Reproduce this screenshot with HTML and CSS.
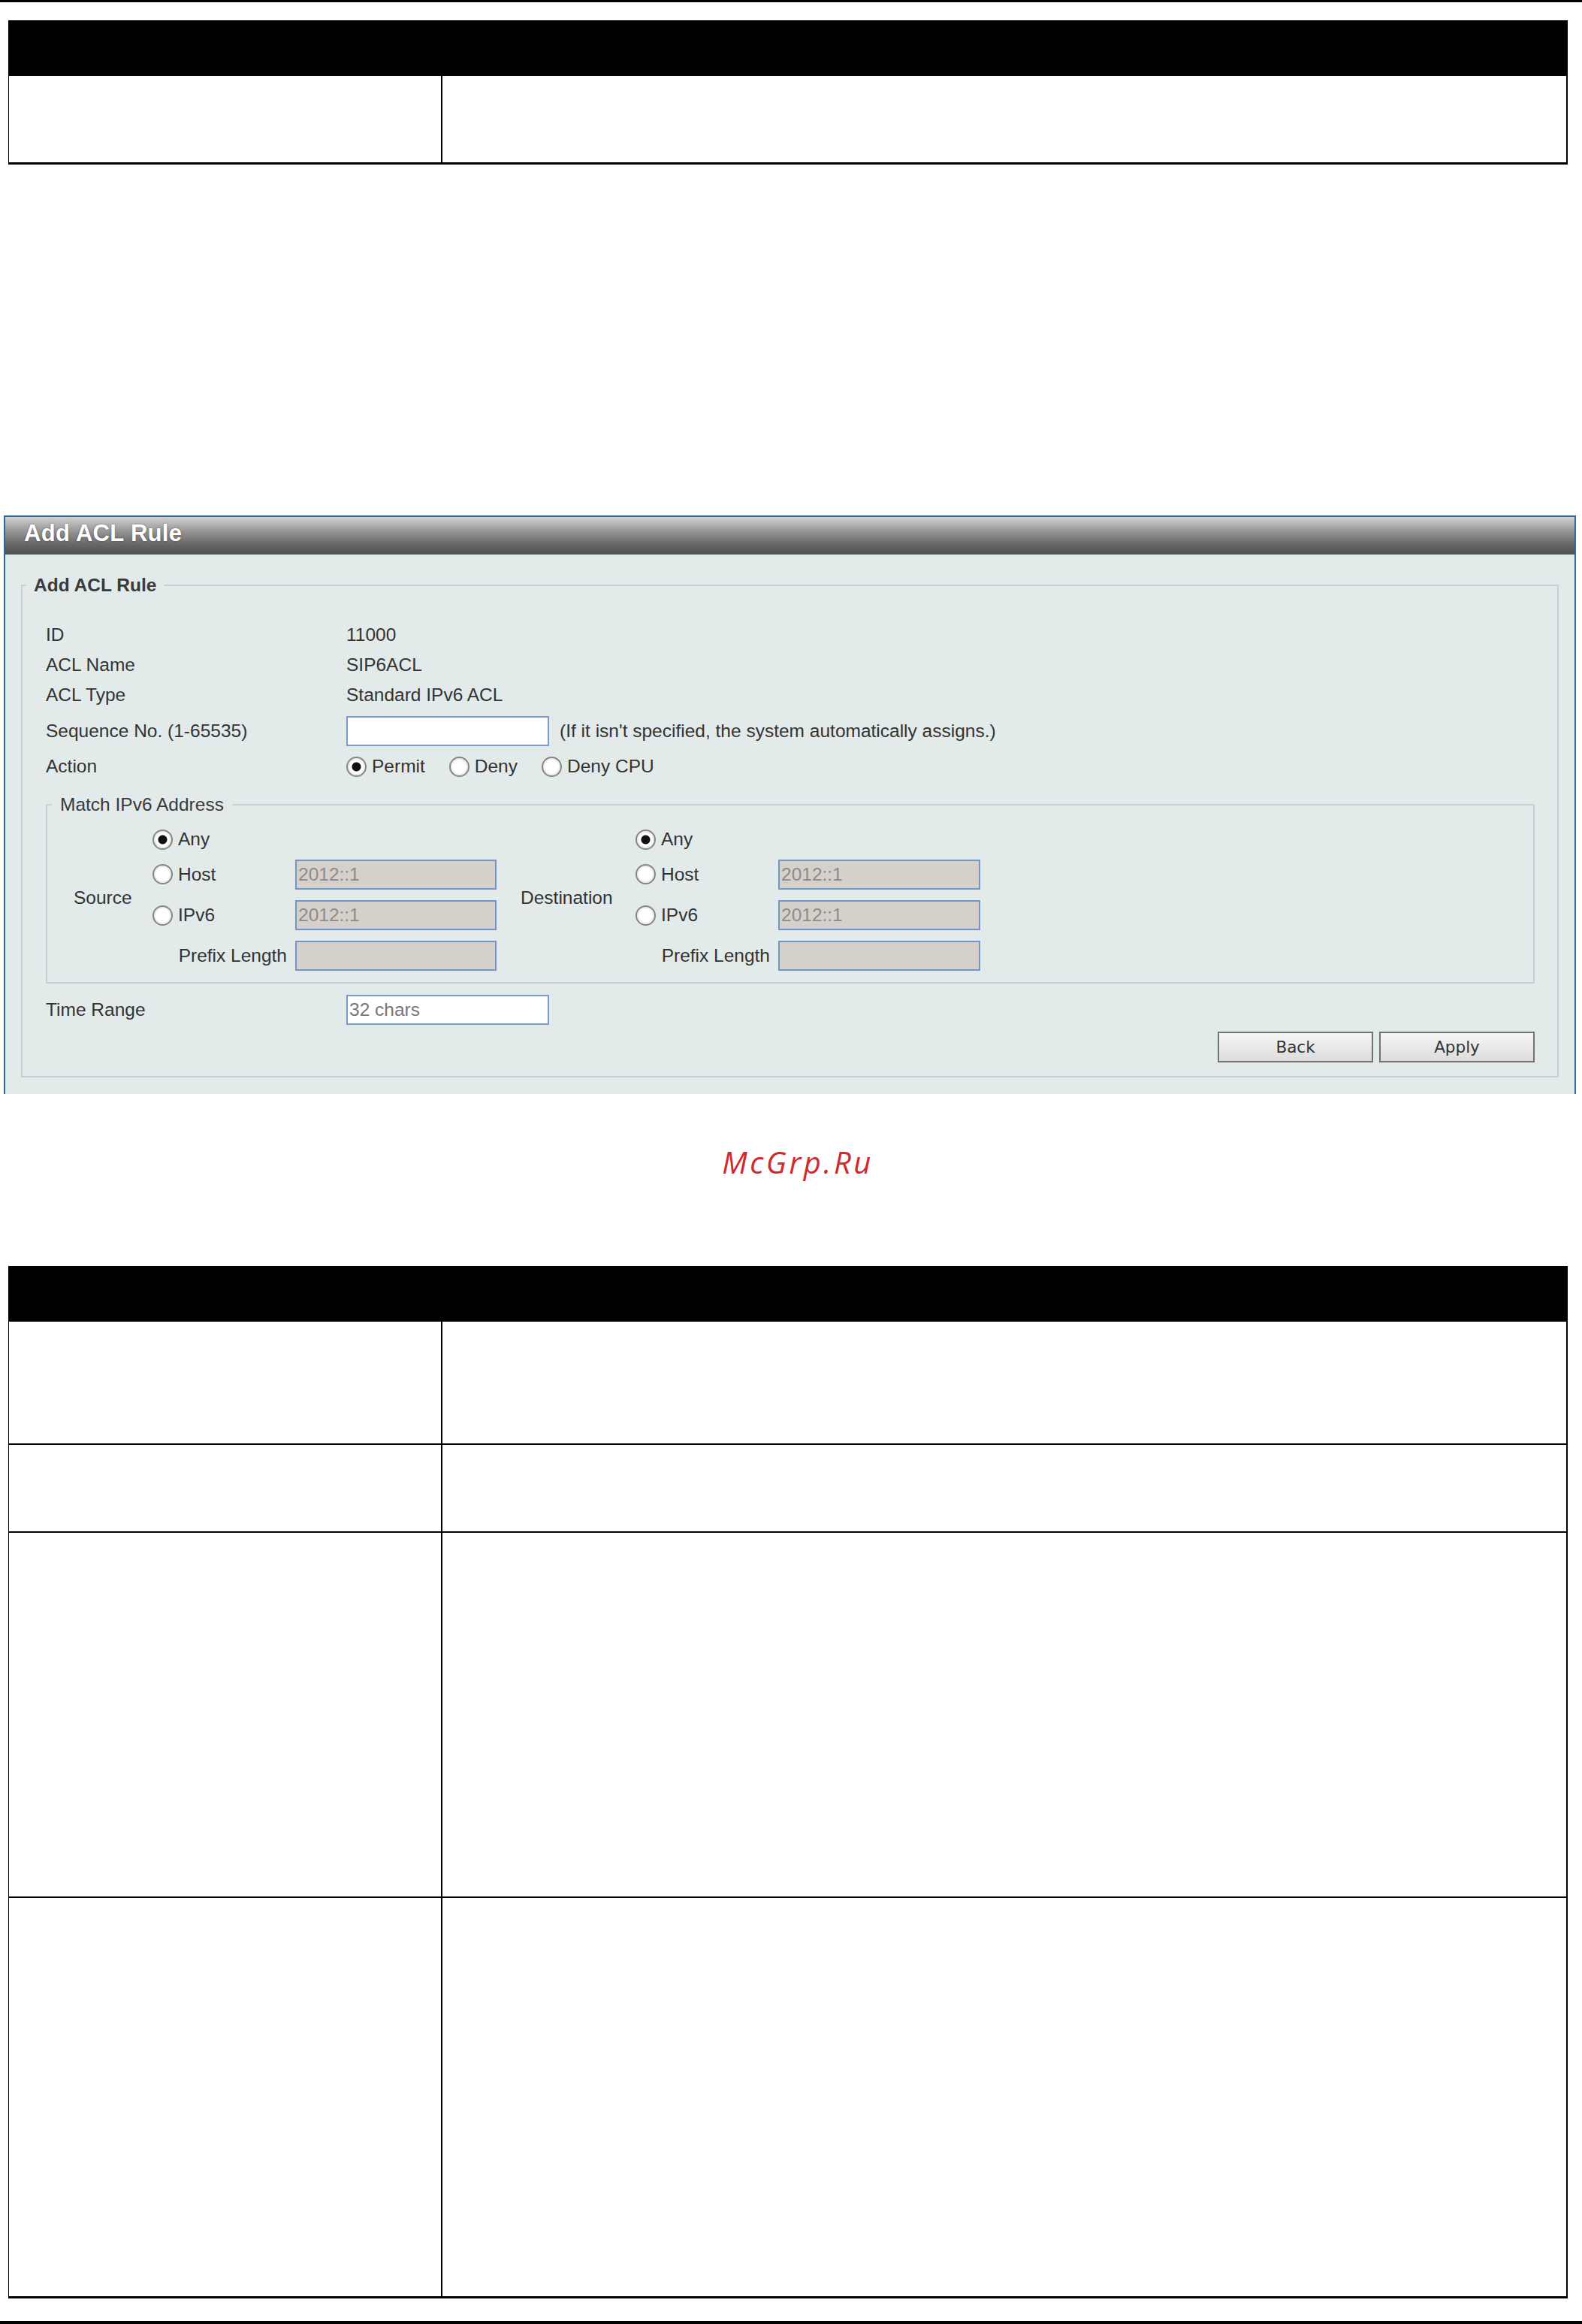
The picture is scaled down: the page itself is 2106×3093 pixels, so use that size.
FILE: index.html
```html
<!DOCTYPE html>
<html lang="en">
<head>
    <meta charset="UTF-8">
    <title>Add ACL Rule</title>
    <link rel="stylesheet" href="styles.css">
</head>
<body>
    <div class="page-rule"></div>

    <div class="spec spec-top">
        <div class="spec-head"></div>
        <div class="spec-row row-last h-118">
            <div class="spec-key"></div>
            <div class="spec-val"></div>
        </div>
    </div>

    <div class="panel">
        <div class="panel-title">Add ACL Rule</div>
        <fieldset class="box">
            <legend class="box-legend strong">Add ACL Rule</legend>

            <div class="form-row">
                <span class="form-label">ID</span>
                <span>11000</span>
            </div>
            <div class="form-row">
                <span class="form-label">ACL Name</span>
                <span>SIP6ACL</span>
            </div>
            <div class="form-row">
                <span class="form-label">ACL Type</span>
                <span>Standard IPv6 ACL</span>
            </div>
            <div class="form-row tall">
                <span class="form-label">Sequence No. (1-65535)</span>
                <input type="text" class="field">
                <span class="hint">(If it isn't specified, the system automatically assigns.)</span>
            </div>
            <div class="form-row">
                <span class="form-label">Action</span>
                <label class="opt inline"><input type="radio" name="action" class="radio" checked>Permit</label>
                <label class="opt inline"><input type="radio" name="action" class="radio">Deny</label>
                <label class="opt inline"><input type="radio" name="action" class="radio">Deny CPU</label>
            </div>

            <fieldset class="box inner">
                <legend class="box-legend">Match IPv6 Address</legend>
                <div class="match">
                    <div class="half src">
                        <span class="side-label">Source</span>
                        <label class="opt"><input type="radio" name="src" class="radio" checked>Any</label>
                        <label class="opt"><input type="radio" name="src" class="radio">Host</label>
                        <input type="text" class="field addr" value="2012::1" disabled>
                        <label class="opt"><input type="radio" name="src" class="radio">IPv6</label>
                        <input type="text" class="field addr" value="2012::1" disabled>
                        <span class="prefix">Prefix Length</span>
                        <input type="text" class="field addr" disabled>
                    </div>
                    <div class="half dst">
                        <span class="side-label">Destination</span>
                        <label class="opt"><input type="radio" name="dst" class="radio" checked>Any</label>
                        <label class="opt"><input type="radio" name="dst" class="radio">Host</label>
                        <input type="text" class="field addr" value="2012::1" disabled>
                        <label class="opt"><input type="radio" name="dst" class="radio">IPv6</label>
                        <input type="text" class="field addr" value="2012::1" disabled>
                        <span class="prefix">Prefix Length</span>
                        <input type="text" class="field addr" disabled>
                    </div>
                </div>
            </fieldset>

            <div class="form-row time-row">
                <span class="form-label">Time Range</span>
                <input type="text" class="field" placeholder="32 chars">
            </div>

            <div class="actions">
                <button class="btn">Back</button>
                <button class="btn">Apply</button>
            </div>
        </fieldset>
    </div>

    <div class="watermark">McGrp.Ru</div>

    <div class="spec spec-bottom">
        <div class="spec-head"></div>
        <div class="spec-row h-164">
            <div class="spec-key"></div>
            <div class="spec-val"></div>
        </div>
        <div class="spec-row h-117">
            <div class="spec-key"></div>
            <div class="spec-val"></div>
        </div>
        <div class="spec-row h-486">
            <div class="spec-key"></div>
            <div class="spec-val"></div>
        </div>
        <div class="spec-row row-last h-533">
            <div class="spec-key"></div>
            <div class="spec-val"></div>
        </div>
    </div>

    <div class="page-foot"></div>
</body>
</html>
```

FILE: styles.css
```css
* {
    margin: 0;
    padding: 0;
    box-sizing: border-box;
}

body {
    background: #fff;
    font-family: 'Liberation Sans', Arial, sans-serif;
    font-size: 24.5px;
    color: #333;
    width: 2106px;
}

.page-rule {
    height: 3px;
    background: #000;
}

.page-foot {
    height: 5px;
    margin-top: 30px;
    background: #000;
}

/* spec tables (empty cells) */
.spec {
    width: 2076px;
    margin-left: 11px;
    border-left: 1px solid #000;
    border-right: 2px solid #000;
}

.spec-top {
    margin-top: 24px;
}

.spec-bottom {
    margin-top: 114px;
}

.spec-head {
    height: 74px;
    background: #000;
}

.spec-row {
    display: flex;
    border-bottom: 2px solid #000;
}

.spec-row.row-last {
    border-bottom-width: 3px;
}

.spec-key {
    width: 577px;
    border-right: 2px solid #000;
}

.spec-val {
    flex: 1;
}

.h-117 { height: 117px; }
.h-118 { height: 118px; }
.h-164 { height: 164px; }
.h-486 { height: 486px; }
.h-533 { height: 533px; }

/* panel */
.panel {
    width: 2093px;
    margin: 467px 0 0 5px;
    padding-bottom: 22px;
    background: #e2eaea;
    border: 2px solid #2c67a0;
    border-bottom: none;
}

.panel-title {
    height: 50px;
    padding-left: 25px;
    line-height: 44px;
    font-size: 31px;
    font-weight: bold;
    color: #fff;
    letter-spacing: 0.3px;
    text-shadow: 0 0 2px rgba(0, 0, 0, 0.5);
    background: linear-gradient(#d2d2d2, #9a9a9a 35%, #6a6a6a 70%, #505050);
}

.box {
    margin: 27px 21px 0;
    padding: 32px 30px 18px 31px;
    border: 2px solid #c6d1d1;
    min-width: 0;
}

/* legend sits at the content edge in chrome, pull it back over the padding */
.box-legend {
    margin-left: -26px;
    padding: 0 10px;
    line-height: 28px;
    color: #3a3a3a;
}

.strong {
    font-weight: bold;
}

.form-row {
    display: flex;
    align-items: center;
    height: 40px;
}

.form-row.tall {
    height: 55px;
}

.form-label {
    width: 400px;
    flex-shrink: 0;
}

.hint {
    margin-left: 14px;
}

.field {
    width: 270px;
    height: 40px;
    padding: 0 2px;
    border: 2px solid #7a9ccc;
    background: #fff;
    font-family: 'Liberation Sans', Arial, sans-serif;
    font-size: 24.5px;
    color: #333;
    outline: none;
}

.field::placeholder {
    color: #777;
}

.field:disabled {
    background: #d5d1ca;
    color: #8c8c8c;
    border-color: #6f97c8;
}

.opt {
    display: flex;
    align-items: center;
    gap: 7px;
}

.opt.inline {
    margin-right: 32px;
}

.radio {
    appearance: none;
    width: 27px;
    height: 27px;
    border: 2px solid #858585;
    border-radius: 50%;
    background: #fff;
    box-shadow: inset 0 0 0 2px #ececec;
    flex-shrink: 0;
}

.radio:checked {
    background: radial-gradient(circle, #111 0 5.5px, #fff 6.5px);
}

/* Match IPv6 Address */
.inner {
    margin: 17px 0 0;
    padding: 9px 0 12px 35px;
}

.inner .box-legend {
    margin-left: -29px;
    padding: 0 11px;
    font-weight: normal;
}

.match {
    display: flex;
}

.half {
    display: grid;
    grid-template-rows: 46px 47px 62px 46px;
    align-items: center;
}

.half.src {
    grid-template-columns: 105px 190px 268px;
}

.half.dst {
    grid-template-columns: 185px 190px 269px;
}

.half.dst .side-label {
    padding-left: 32px;
}

.side-label {
    grid-column: 1;
    grid-row: 1 / 5;
}

.half .opt,
.half .prefix {
    grid-column: 2;
}

.half .addr {
    grid-column: 3;
    width: 100%;
}

.prefix {
    justify-self: end;
    padding-right: 11px;
}

.time-row {
    margin-top: 15px;
}

.actions {
    display: flex;
    justify-content: flex-end;
    gap: 8px;
    margin-top: 9px;
}

.btn {
    width: 207px;
    height: 41px;
    border: 2px solid #727272;
    background: linear-gradient(#f6f6f6, #dcdcdc);
    font-family: 'DejaVu Sans', Verdana, sans-serif;
    font-size: 21.5px;
    color: #333;
}

.watermark {
    margin-top: 67px;
    padding-left: 18px;
    height: 48px;
    line-height: 48px;
    text-align: center;
    font-family: 'Open Sans', sans-serif;
    font-style: italic;
    font-size: 40px;
    letter-spacing: 3.5px;
    color: #d3282c;
}
```
